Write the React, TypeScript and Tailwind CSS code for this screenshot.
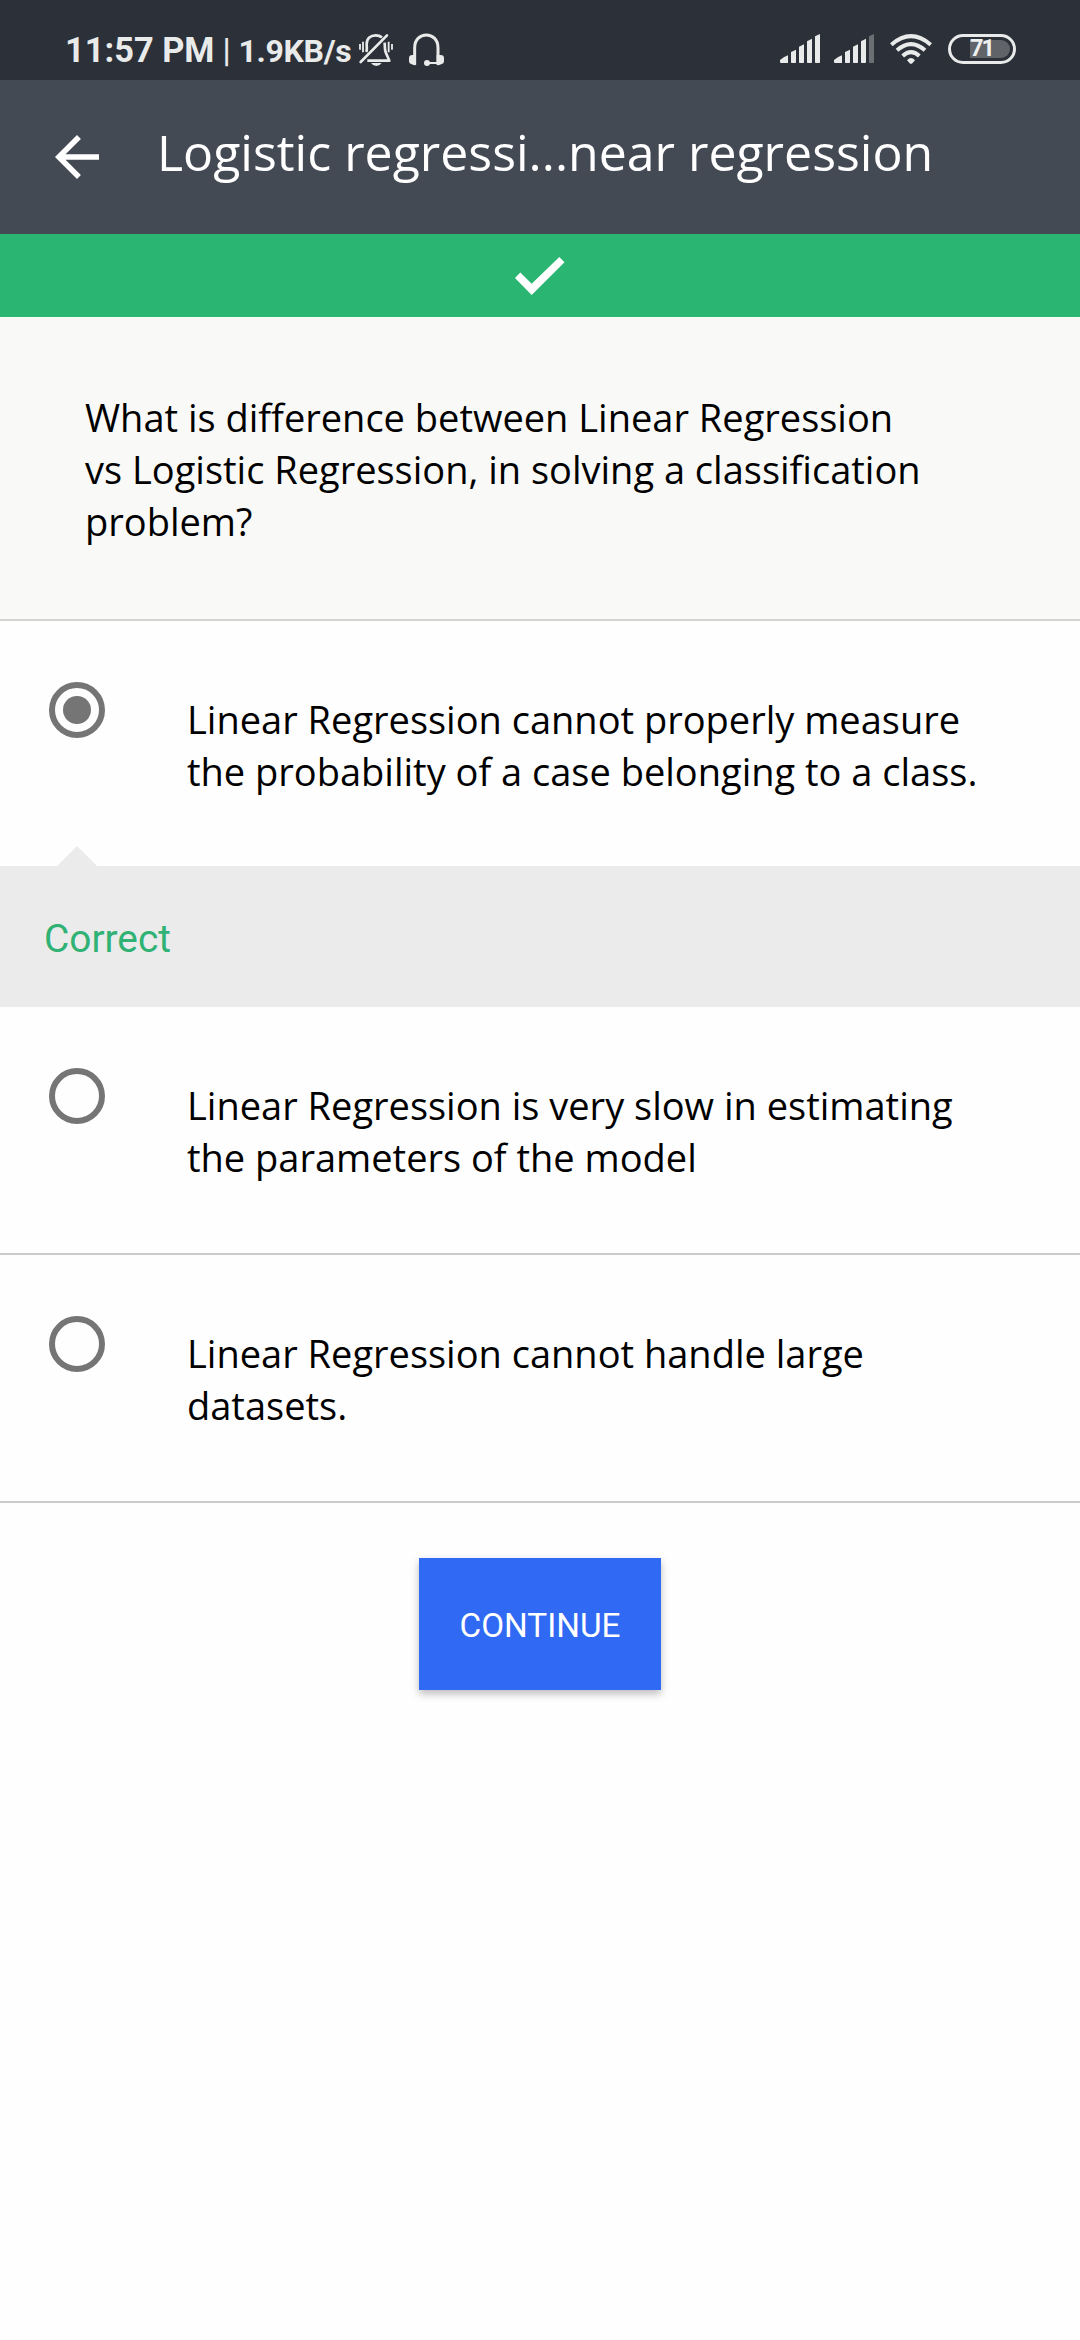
import type { ReactNode } from "react";

function BellOffIcon() {
  return (
    <svg className="mt-[33px] ml-[7px] h-[34px] w-[36px] shrink-0" viewBox="84 69 108 102" fill="none" stroke="#e9eaea" strokeWidth="8">
      <path d="M109 126 C112 117 110 110 110 103 C110 85 122 76 137 76 C146 76 152 79 156 82" />
      <path d="M164 98 C165 122 165 124 171 136 L178 152 L112 152" strokeLinejoin="round" />
      <path d="M92 156 L171 76" strokeLinecap="round" />
      <path d="M123 159 H155 Q149 168 139 168 Q129 168 123 159Z" fill="#e9eaea" stroke="none" />
      <path d="M90 102 V119 M99 95 V127 M176 95 V127 M186 102 V119" strokeWidth="5.5" />
    </svg>
  );
}

function HeadsetIcon() {
  return (
    <svg className="mt-[33px] ml-[14px] h-[34px] w-[37px] shrink-0" viewBox="234 69 111 102" fill="none" stroke="#e9eaea">
      <path d="M254 164 V113 C254 62 324 62 324 113 V164" strokeWidth="9" />
      <path d="M258 135 H247 Q237 135 237 145 V154 Q237 160 243 162 L254 166 Q258 166 258 162Z" fill="#e9eaea" stroke="none" />
      <path d="M320 135 H332 Q342 135 342 145 V154 Q342 160 336 162 L325 166 Q320 166 320 162Z" fill="#e9eaea" stroke="none" />
      <path d="M291 159 H324" strokeWidth="6" />
      <circle cx="291" cy="159" r="9" fill="#e9eaea" stroke="none" />
    </svg>
  );
}

function SignalIcon({ weak = false }: { weak?: boolean }) {
  return (
    <svg className="h-[29px] w-[40px] shrink-0" viewBox="60 72 120 87" fill="#e9eaea">
      <path d="M60 150 Q70 141 84 136 V159 H63 Q60 159 60 156Z" />
      <path d="M93 126 L108 119 V157 Q108 159 106 159 H95 Q93 159 93 157Z" />
      <path d="M117 110 L132 103 V157 Q132 159 130 159 H119 Q117 159 117 157Z" />
      <path d="M141 94 L156 86 V157 Q156 159 154 159 H143 Q141 159 141 157Z" />
      <path d="M165 79 L180 72 V157 Q180 159 178 159 H167 Q165 159 165 157Z" fill={weak ? "#6b6e73" : "#e9eaea"} />
    </svg>
  );
}

function WifiIcon() {
  return (
    <svg className="ml-[15px] h-[32px] w-[44px] shrink-0" viewBox="387 69 132 96" fill="none" stroke="#e9eaea" strokeWidth="12">
      <path d="M394 104 Q453 53 512 104" />
      <path d="M411 121 Q453 84 495 121" />
      <path d="M428 138 Q453 115 478 138" />
      <path d="M441 151 Q453 137 465 151 L457 160 Q453 163 449 160Z" fill="#e9eaea" stroke="none" />
    </svg>
  );
}

function Battery() {
  return (
    <div className="ml-[15px] flex h-[30px] w-[68px] items-center rounded-full border-[3px] border-[#e9eaea] pl-[19px]">
      <div className="flex h-[18px] w-[40px] items-center rounded-l-[2px] rounded-r-full bg-[#606368] text-[23.5px] leading-none font-bold tracking-[-2px] text-[#eeefef]">
        71
      </div>
    </div>
  );
}

function Radio({ checked = false }: { checked?: boolean }) {
  return (
    <span className="mt-[61px] ml-[49px] flex size-14 shrink-0 items-center justify-center rounded-full border-[6px] border-[#757575]">
      {checked && <span className="size-7 rounded-full bg-[#757575]" />}
    </span>
  );
}

function Option({ checked, children }: { checked?: boolean; children: ReactNode }) {
  return (
    <div className={checked ? "relative flex h-[245px]" : "flex h-[248px] border-b-2 border-[#cbcbcb]"}>
      <Radio checked={checked} />
      <p className="mt-[72px] ml-[82px] text-[38px] leading-[52px] whitespace-nowrap text-black">{children}</p>
      {checked && (
        <svg className="absolute bottom-0 left-[57px] h-[20px] w-[40px]" viewBox="0 0 40 20">
          <path d="M0 20 L20 0 L40 20Z" fill="#ebebeb" />
        </svg>
      )}
    </div>
  );
}

export default function App() {
  return (
    <div className="flex min-h-[2340px] w-[1080px] flex-col bg-[#fefefe] font-['Open_Sans',sans-serif]">
      <div className="flex h-20 items-start justify-between bg-[#2c3038] pr-[64px] pl-[65px] font-['Roboto',sans-serif] text-[#e9eaea]">
        <div className="flex">
          <div className="mt-[33px] flex items-baseline leading-[34px] whitespace-nowrap">
            <span className="text-[34.4px] font-bold">11:57 PM</span>
            <span className="ml-[8px] w-[16px] text-[33px] font-medium">|</span>
            <span className="w-[113px] text-[32px] font-bold tracking-[-0.3px]">1.9KB/s</span>
          </div>
          <BellOffIcon />
          <HeadsetIcon />
        </div>
        <div className="mt-[34px] flex items-start">
          <SignalIcon />
          <span className="w-[14px]" />
          <SignalIcon weak />
          <div className="-mt-px flex">
            <WifiIcon />
          </div>
          <Battery />
        </div>
      </div>

      <header className="flex h-[154px] items-center bg-[#444a54] text-white">
        <svg className="ml-[44px] size-[66px] shrink-0" viewBox="0 0 24 24" fill="currentColor">
          <path d="M20 11H7.83l5.59-5.59L12 4l-8 8 8 8 1.41-1.41L7.83 13H20v-2z" />
        </svg>
        <h1 className="ml-[47px] pb-[11px] text-[50px] leading-[68px] whitespace-nowrap">Logistic regressi...near regression</h1>
      </header>

      <div className="flex h-[83px] items-center justify-center bg-[#2bb572]">
        <svg className="h-[38px] w-[50px]" viewBox="0 0 50 38" fill="#fff">
          <path d="M0 21 L5.3 15.6 L16.7 26.8 L44.3 0 L49.5 5.2 L16.7 38Z" />
        </svg>
      </div>

      <div className="h-[304px] border-b-2 border-[#d3d3d1] bg-[#f9f9f7] pt-[74px] pl-[85px] text-[38px] leading-[52px] whitespace-nowrap text-black">
        <p>What is difference between Linear Regression</p>
        <p>vs Logistic Regression, in solving a classification</p>
        <p>problem?</p>
      </div>

      <Option checked>
        Linear Regression cannot properly measure
        <br />
        the probability of a case belonging to a class.
      </Option>
      <div className="flex h-[141px] items-center bg-[#ebebeb] pt-[6px] pl-[44px] font-['Roboto',sans-serif] text-[38.8px] leading-none text-[#2fb273]">
        Correct
      </div>
      <Option>
        Linear Regression is very slow in estimating
        <br />
        the parameters of the model
      </Option>
      <Option>
        Linear Regression cannot handle large
        <br />
        datasets.
      </Option>

      <button className="mt-[55px] flex h-[132px] w-[242px] items-center justify-center self-center bg-[#3069f4] pt-[3px] font-['Roboto',sans-serif] text-[33.3px] leading-none text-white shadow-[0_4px_8px_rgba(0,0,0,0.26)]">
        CONTINUE
      </button>
    </div>
  );
}
